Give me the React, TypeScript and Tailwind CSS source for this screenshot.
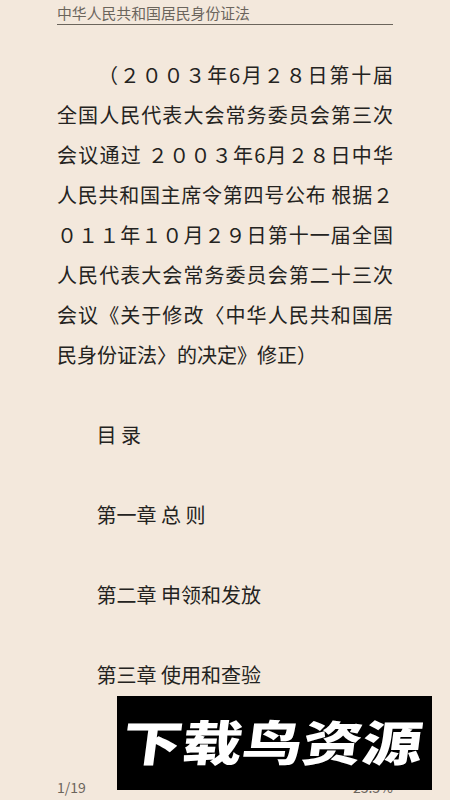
const lines = [
  "（２００３年6月２８日第十届",
  "全国人民代表大会常务委员会第三次",
  "会议通过 ２００３年6月２８日中华",
  "人民共和国主席令第四号公布 根据２",
  "０１１年１０月２９日第十一届全国",
  "人民代表大会常务委员会第二十三次",
  "会议《关于修改〈中华人民共和国居",
];
const toc = ["目 录", "第一章 总 则", "第二章 申领和发放", "第三章 使用和查验"];
export default function App() {
  return (
    <div className="relative flex h-[800px] w-[450px] flex-col overflow-hidden bg-[#f3e8dc] px-[57px] text-[#242321] [font-family:'Noto_Sans_CJK_SC','Noto_Sans',sans-serif]">
      <div className="mt-[3px] h-[22px] border-b border-[#6b655c] text-[14.85px] leading-[20px] text-[#6b655c]">中华人民共和国居民身份证法</div>
      <div className="mt-[30px] text-[20px] leading-[40px]">
        {lines.map((l, i) => <div key={l} className={i === 0 ? "pl-[41px] whitespace-pre-wrap text-justify [text-align-last:justify]" : "whitespace-pre-wrap text-justify [text-align-last:justify]"}>{l}</div>)}
        <div>民身份证法〉的决定》修正）</div>
      </div>
      <div className="mt-[40px] flex flex-col gap-[40px] pl-[39.5px] text-[20px] leading-[40px]">
        {toc.map((t) => <div key={t}>{t}</div>)}
      </div>
      <div className="absolute bottom-[3px] left-[57px] text-[14px] leading-[19px] text-[#6b655c]">1/19</div>
      <div className="absolute bottom-[3px] right-[57px] text-[14px] leading-[19px] text-[#6b655c]">23.3%</div>
      <div className="absolute left-[117px] top-[696px] flex h-[94px] w-[315px] items-center justify-center bg-black pr-[4px] pb-[6px] text-[60px] leading-none font-black whitespace-nowrap text-white">
        <span className="-skew-x-6 scale-y-[0.8]">下载鸟资源</span>
      </div>
    </div>
  );
}
